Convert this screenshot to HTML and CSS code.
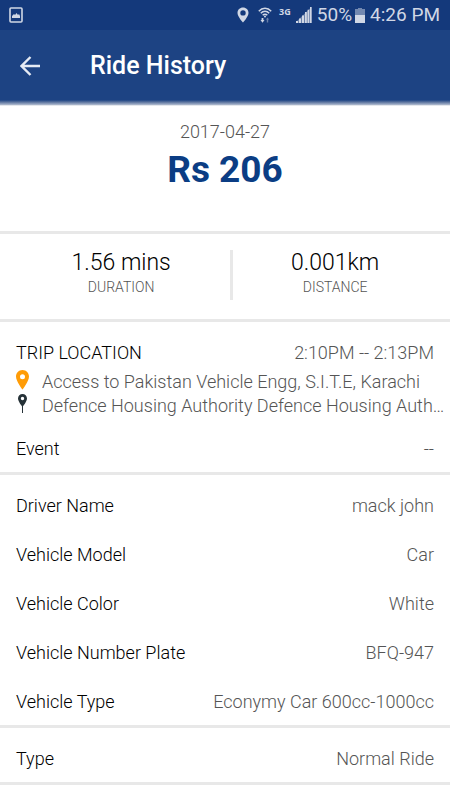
FILE: index.html
```html
<!DOCTYPE html>
<html lang="en">
<head>
<meta charset="utf-8">
<meta name="viewport" content="width=device-width, initial-scale=1">
<title>Ride History</title>
<link rel="stylesheet" href="styles.css">
</head>
<body>
<div class="status">
  <svg class="status-photo" width="14" height="16" viewBox="0 0 14 16" aria-hidden="true"><rect x="1" y="1" width="12" height="14" rx="1" fill="none" stroke="currentColor" stroke-width="1.6"/><path d="M3 11V9l2-2 1 1 1.500-2L9 8l1-1 1 2v2z" fill="currentColor"/></svg>
  <div class="status-right">
    <svg class="icon-pin" width="12" height="16" viewBox="0 0 12 16" aria-hidden="true"><path fill="currentColor" fill-rule="evenodd" d="M6 .5C2.800.5.5 2.900.5 5.900.5 9.500 6 15.500 6 15.500s5.500-6 5.500-9.600C11.500 2.900 9.200.5 6 .5zM6 3.200a2.700 2.700 0 1 1 0 5.400 2.700 2.700 0 0 1 0-5.400z"/></svg>
    <svg class="icon-wifi" width="14" height="16" viewBox="0 0 14 16" aria-hidden="true"><g fill="none" stroke="currentColor" stroke-width="1.500"><path d="M.8 4.200C4.300.3 9.700.3 13.200 4.200"/><path d="M2.800 6.300c2.400-2.700 6-2.700 8.400 0"/><path d="M4.700 8.300c1.300-1.400 3.300-1.400 4.600 0"/></g><circle cx="7" cy="9.500" r="1" fill="currentColor"/><path d="M3.600 11h1.800v2h1.100l-2 2.800-2-2.800h1.100z" fill="currentColor"/><path d="M9.500 10.500l1.600 2h-.9v3H8.800v-3h-.9z" fill="currentColor" opacity=".45"/></svg>
    <span class="network">3G</span>
    <svg class="icon-signal" width="16" height="16" viewBox="0 0 16 16" aria-hidden="true"><path d="M0 16h2v-2H0zM3 16h2v-4.500H3zM6 16h2V8.500H6zM9 16h1.800v-11H9zM11.600 16h1.600V2.800h-1.600zM14 16h1.600V0H14z" fill="currentColor"/><path d="M0 16V15L15.500 0v16z" fill="currentColor" opacity=".45"/></svg>
    <span class="battery-level">50%</span>
    <svg class="icon-battery" width="10" height="16" viewBox="0 0 10 16" aria-hidden="true"><path d="M3 1h4v1h3v6H0V2h3z" fill="currentColor" opacity=".5"/><path d="M0 8h10v8H0z" fill="currentColor"/></svg>
    <span>4:26 PM</span>
  </div>
</div>
<header class="app-bar">
  <button class="back" type="button" aria-label="Back"><svg width="20" height="20" viewBox="0 0 20 20" aria-hidden="true"><path d="M20 10H2M10.500 1L1.500 10l9 9" fill="none" stroke="currentColor" stroke-width="2.400"/></svg></button>
  <h1 class="title">Ride History</h1>
</header>
<main>
  <section class="summary">
    <div class="date">2017-04-27</div>
    <div class="fare">Rs 206</div>
  </section>
  <section class="stats">
    <div class="stat stat-duration"><div class="stat-value">1.56 mins</div><div class="stat-label">DURATION</div></div>
    <div class="stat stat-distance"><div class="stat-value">0.001km</div><div class="stat-label">DISTANCE</div></div>
  </section>
  <section class="group">
    <div class="trip">
      <div class="trip-head"><span>TRIP LOCATION</span><span class="value">2:10PM -- 2:13PM</span></div>
      <div class="place"><svg class="place-icon" width="13" height="20" viewBox="0 0 13 20" aria-hidden="true"><path fill="#ff9c07" fill-rule="evenodd" d="M6.500 0C2.900 0 0 2.900 0 6.500 0 11.200 6.500 19.500 6.500 19.500S13 11.200 13 6.500C13 2.900 10.100 0 6.500 0zm0 4.300a2.500 2.500 0 1 1 0 5 2.500 2.500 0 0 1 0-5z"/></svg><span class="place-name">Access to Pakistan Vehicle Engg, S.I.T.E, Karachi</span></div>
      <div class="place"><svg class="place-icon" width="13" height="20" viewBox="0 0 13 20" aria-hidden="true"><path fill="#263238" fill-rule="evenodd" d="M6.500 0C4 0 2 2 2 4.500 2 7.500 6.500 13 6.500 13S11 7.500 11 4.500C11 2 9 0 6.500 0zm0 2.800a1.700 1.700 0 1 1 0 3.400 1.700 1.700 0 0 1 0-3.400z"/><path d="M6.500 11v8" stroke="#263238"/></svg><span class="place-name">Defence Housing Authority Defence Housing Auth…</span></div>
    </div>
    <dl class="rows">
      <div class="row"><dt>Event</dt><dd>--</dd></div>
    </dl>
  </section>
  <section class="group">
    <dl class="rows">
      <div class="row"><dt>Driver Name</dt><dd>mack john</dd></div>
      <div class="row"><dt>Vehicle Model</dt><dd>Car</dd></div>
      <div class="row"><dt>Vehicle Color</dt><dd>White</dd></div>
      <div class="row"><dt>Vehicle Number Plate</dt><dd>BFQ-947</dd></div>
      <div class="row"><dt>Vehicle Type</dt><dd>Econymy Car 600cc-1000cc</dd></div>
    </dl>
  </section>
  <section class="group">
    <dl class="rows">
      <div class="row"><dt>Type</dt><dd>Normal Ride</dd></div>
    </dl>
  </section>
</main>
</body>
</html>
```
FILE: styles.css
```css
* {
  box-sizing: border-box;
}

body {
  margin: 0;
  background: #fff;
  color: #000;
  font-family: Roboto, "Liberation Sans", sans-serif;
  font-size: 18px;
  font-weight: 300;
  line-height: 24px;
}

svg {
  display: block;
  flex: none;
}

.status {
  display: flex;
  align-items: center;
  justify-content: space-between;
  height: 30px;
  padding: 0 10px 0 9px;
  background: #14397b;
  color: #d0d7e5;
  font-size: 19px;
  font-weight: 400;
}

.status-right {
  display: flex;
  align-items: center;
}

.icon-wifi {
  margin-left: 9px;
}

.network {
  margin: 0 5px 6px 7px;
  font-family: "Open Sans", sans-serif;
  font-size: 9px;
  font-weight: 700;
  line-height: 12px;
}

.battery-level {
  margin: 0 3px 0 5px;
}

.icon-battery {
  margin-right: 5px;
}

.app-bar {
  display: flex;
  align-items: center;
  height: 76px;
  padding: 0 20px 3px;
  border-bottom: 1px solid #e4e7ec;
  background: linear-gradient(#1d4383 70px, #58719d 72px, #b3bdd0 75px);
  color: #fff;
}

.back {
  padding: 0;
  border: 0;
  background: none;
  color: #e6ebf4;
}

.title {
  margin: 0 0 0 50px;
  font-size: 25px;
  font-weight: 500;
  line-height: 34px;
}

.summary {
  padding: 14px 16px 35px;
  border-bottom: 3px solid #e8e8e8;
  text-align: center;
}

.date {
  color: #555;
}

.fare {
  color: #0b3d84;
  font-size: 37px;
  font-weight: 700;
  line-height: 52px;
}

.stats {
  display: flex;
  padding: 16px 13px 19px 12px;
  border-bottom: 3px solid #e8e8e8;
}

.stat {
  height: 50px;
  text-align: center;
}

.stat-duration {
  flex: 15 1 0;
  border-right: 3px solid #e8e8e8;
}

.stat-distance {
  flex: 14 1 0;
}

.stat-value {
  font-size: 23px;
  line-height: 26px;
}

.stat-label {
  color: #555;
  font-size: 14px;
  line-height: 22px;
}

.group {
  border-bottom: 3px solid #e8e8e8;
}

.trip {
  padding: 19px 4px 0 16px;
}

.trip-head {
  display: flex;
  justify-content: space-between;
  padding-right: 12px;
  margin-bottom: 5px;
}

.value,
.place-name,
dd {
  color: #555;
}

.place {
  display: flex;
  gap: 13px;
}

.place-name {
  min-width: 0;
  overflow: hidden;
  text-overflow: ellipsis;
  white-space: nowrap;
}

.rows {
  display: flex;
  flex-direction: column;
  gap: 9px;
  margin: 0;
  padding: 11px 16px 3px;
}

.row {
  display: flex;
  align-items: center;
  justify-content: space-between;
  height: 40px;
}

dd {
  margin: 0;
}
```
